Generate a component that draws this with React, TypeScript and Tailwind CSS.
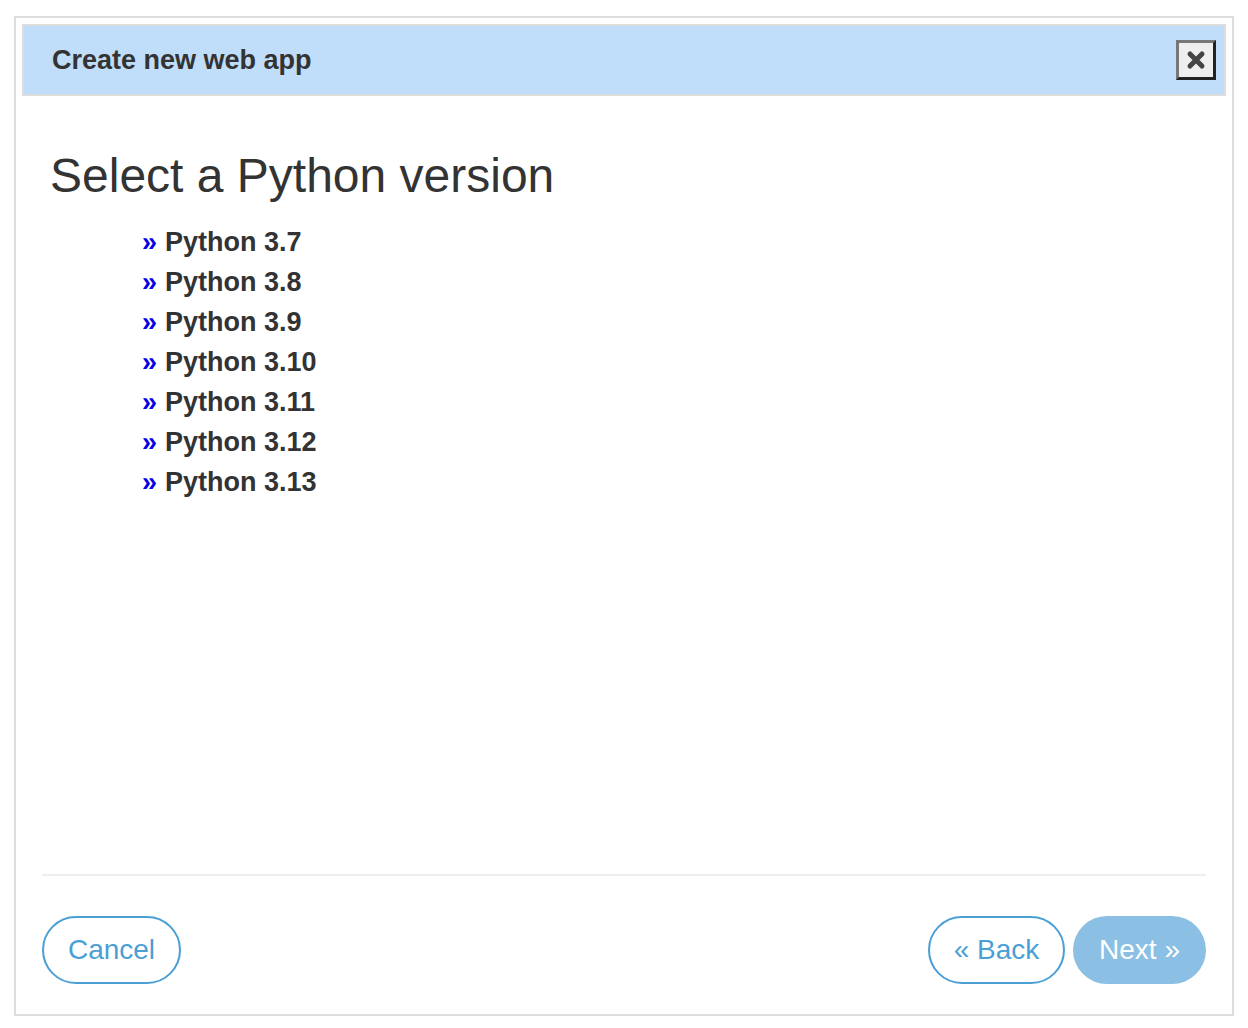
export default function App() {
  const versions = ["3.7", "3.8", "3.9", "3.10", "3.11", "3.12", "3.13"];
  return (
    <div className="w-[1248px] h-[1028px] bg-white pt-[16px] px-[14px]" style={{ fontFamily: '"Liberation Sans", Arial, sans-serif' }}>
      <div className="w-[1220px] h-[1000px] border-2 border-[#dddddd] p-[6px] flex flex-col">
        <div className="h-[72px] bg-[#c0ddf9] border-2 border-[#dddddd] flex items-center justify-between pl-[28px] pr-[8px]">
          <span className="text-[27px] font-bold text-[#333333]">Create new web app</span>
          <div className="w-[40px] h-[40px] bg-[#eeeeee] border-[3px] border-t-[#777] border-l-[#777] border-b-[#222] border-r-[#222] flex items-center justify-center">
            <svg width="20" height="20" viewBox="0 0 20 20"><path d="M4 4 L16 16 M16 4 L4 16" stroke="#444" strokeWidth="5" strokeLinecap="round" /></svg>
          </div>
        </div>
        <div className="flex-1 flex flex-col px-[20px]">
          <h1 className="text-[48px] text-[#333333] leading-none mt-[56px] ml-[8px]">Select a Python version</h1>
          <ul className="mt-[22px] ml-[100px] flex flex-col">
            {versions.map((v) => (
              <li key={v} className="h-[40px] flex items-center text-[27px] font-bold text-[#333333]">
                <span className="text-[#0000ee] mr-[8px]">»</span>Python {v}
              </li>
            ))}
          </ul>
          <div className="flex-1" />
          <div className="border-t-2 border-[#eeeeee]" />
          <div className="flex items-center justify-between mt-[40px] mb-[24px]">
            <button className="h-[68px] w-[139px] rounded-full border-2 border-[#4a9fd5] text-[#4a9fd5] text-[28px]">Cancel</button>
            <div className="flex gap-[8px]">
              <button className="h-[68px] w-[137px] rounded-full border-2 border-[#4a9fd5] text-[#4a9fd5] text-[28px]">« Back</button>
              <button className="h-[68px] w-[133px] rounded-full bg-[#8bbfe3] text-white text-[28px]">Next »</button>
            </div>
          </div>
        </div>
      </div>
    </div>
  );
}
